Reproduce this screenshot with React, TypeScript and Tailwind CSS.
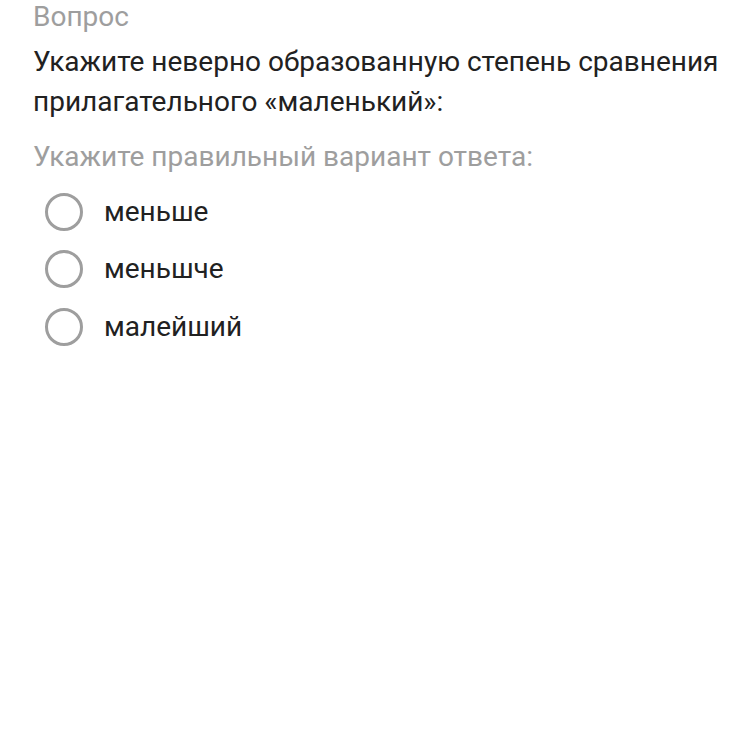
import React from 'react';

const options = ['меньше', 'меньшче', 'малейший'];

export default function App() {
  return (
    <div className="min-h-[750px] w-[750px] bg-white pl-[33px] font-['Roboto',sans-serif]">
      <div className="text-[28px] leading-[34px] text-[#9e9e9e]">Вопрос</div>
      <div className="mt-[8px] whitespace-nowrap text-[28px] leading-[40px] text-[#212121]">
        Укажите неверно образованную степень сравнения
        <br />
        прилагательного «маленький»:
      </div>
      <div className="mt-[18px] text-[28px] leading-[34px] text-[#9e9e9e]">
        Укажите правильный вариант ответа:
      </div>
      <div className="mt-[9px] flex flex-col">
        {options.map((opt) => (
          <label key={opt} className="flex h-[57.5px] items-center">
            <span className="ml-[12px] h-[38px] w-[38px] shrink-0 rounded-full border-[3px] border-[#9e9e9e]" />
            <span className="ml-[21px] text-[28px] text-[#212121]">{opt}</span>
          </label>
        ))}
      </div>
    </div>
  );
}
